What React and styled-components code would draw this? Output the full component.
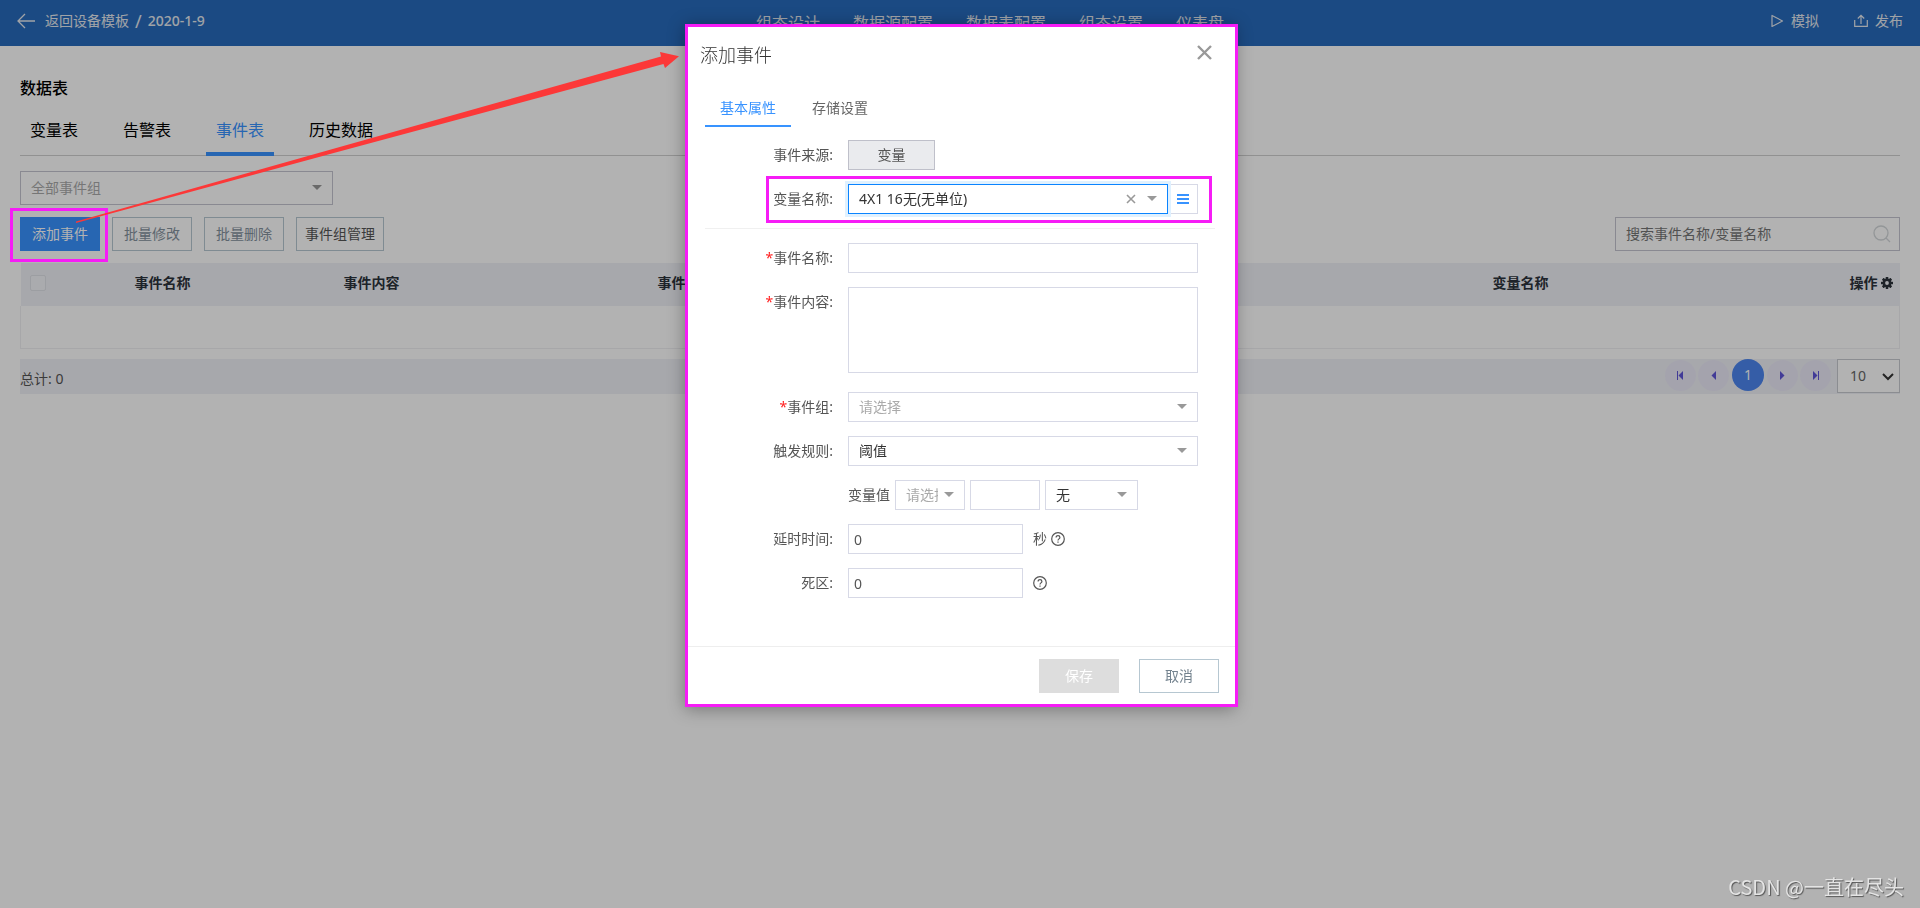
import React from "react";
import styled, { createGlobalStyle, css } from "styled-components";

const BLUE = "#3893ff";
const MAGENTA = "#f61cf6";

const GlobalStyle = createGlobalStyle`
  *, *::before, *::after { box-sizing: border-box; }
  body {
    margin: 0;
    background: #fff;
    color: #333;
    font: 14px/20px "Noto Sans", "Noto Sans CJK SC", sans-serif;
  }
  button, input, select, textarea { font: inherit; color: inherit; margin: 0; border-radius: 0; }
  button { cursor: pointer; }
`;

/* ---------- page ---------- */

const Page = styled.div`
  min-height: 100vh;
`;

const TopBar = styled.header`
  display: grid;
  grid-template-columns: 1fr auto 1fr;
  align-items: center;
  height: 46px;
  padding: 0 17px;
  background: #286bbc;
  color: #e6eaf0;
`;

const Crumb = styled.div`
  display: flex;
  align-items: center;
  height: 42px;
  gap: 6px;
  align-self: start;
`;

const BackLink = styled.a`
  display: flex;
  align-items: center;
  gap: 10px;
  color: inherit;
  text-decoration: none;
`;

const Slash = styled.span`
  font-size: 18px;
`;

const ProjectName = styled.span`
  font-weight: 500;
`;

const MainNav = styled.nav`
  display: flex;
  gap: 33px;
  padding-left: 60px;
`;

const NavLink = styled.a`
  color: inherit;
  font-size: 16px;
  text-decoration: none;
  white-space: nowrap;
`;

const TopActions = styled.div`
  display: flex;
  justify-content: flex-end;
  align-self: start;
  height: 42px;
  gap: 35px;
`;

const TopAction = styled.button`
  display: flex;
  align-items: center;
  gap: 7px;
  padding: 0;
  border: 0;
  background: none;
`;

const Main = styled.main`
  padding: 32px 20px 0;
`;

const PageTitle = styled.h1`
  margin: 0;
  color: #000;
  font-size: 16px;
  font-weight: 500;
  line-height: 20px;
`;

const PageTabs = styled.div`
  display: flex;
  gap: 25px;
  margin-top: 8px;
  box-shadow: inset 0 -1px #d0d0d0;
`;

const PageTab = styled.button`
  height: 50px;
  padding: 2px 10px 0;
  border: 0;
  border-bottom: 4px solid ${(p) => (p.$active ? BLUE : "transparent")};
  background: none;
  color: ${(p) => (p.$active ? BLUE : "#000")};
  font-size: 16px;
`;

const Filters = styled.div`
  margin-top: 15px;
`;

const Toolbar = styled.div`
  display: flex;
  gap: 12px;
  margin: 12px 0;
`;

const ToolButton = styled.button`
  height: 34px;
  min-width: 80px;
  padding: 0 8px;
  border: 1px solid #b6c7d1;
  background: #fff;
  color: #555;
  &:disabled { color: #84929e; }
  ${(p) => p.$primary && css`
    border-color: ${BLUE};
    background: ${BLUE};
    color: #fff;
  `}
`;

const Marked = styled.div`
  position: relative;
`;

const Mark = styled.span`
  position: absolute;
  inset: ${(p) => p.$inset};
  z-index: 20;
  border: 3px solid ${MAGENTA};
  pointer-events: none;
`;

const SearchBox = styled.label`
  display: flex;
  align-items: center;
  width: 285px;
  height: 34px;
  margin-left: auto;
  padding: 0 8px 0 10px;
  border: 1px solid #c4c5d0;
`;

const SearchInput = styled.input`
  flex: 1;
  min-width: 0;
  padding: 0;
  border: 0;
  outline: 0;
  background: none;
  &::placeholder { color: #757575; opacity: 1; }
`;

const Table = styled.table`
  width: 100%;
  table-layout: fixed;
  border-collapse: collapse;
`;

const HeadCell = styled.th`
  height: 43px;
  padding: 0 0 4px 9px;
  background: #f0f1f7;
  color: #2c333b;
  font-weight: 700;
  text-align: left;
  white-space: nowrap;
`;

const HeadLabel = styled.span`
  display: flex;
  align-items: center;
  gap: 3px;
`;

const EmptyCell = styled.td`
  height: 42px;
  border: 1px solid #f0f0f2;
  border-top: 0;
`;

const CheckBox = styled.input`
  display: block;
  appearance: none;
  width: 16px;
  height: 16px;
  margin: 0;
  border: 1px solid #e0e2e8;
  border-radius: 2px;
  background: #f4f5f9;
`;

const TableFoot = styled.div`
  display: flex;
  align-items: flex-start;
  justify-content: space-between;
  height: 35px;
  margin-top: 10px;
  background: #f0f1f7;
`;

const Total = styled.span`
  padding-top: 10px;
  color: #555;
`;

const Pager = styled.div`
  display: flex;
  align-items: flex-end;
  gap: 2px;
`;

const PageButton = styled.button`
  display: flex;
  align-items: center;
  justify-content: center;
  width: ${(p) => (p.$active ? 32 : 31)}px;
  height: ${(p) => (p.$active ? 32 : 31)}px;
  margin-bottom: 2px;
  padding: 0;
  border: 0;
  border-radius: 50%;
  background: ${(p) => (p.$active ? "#4c86f0" : "#ebeaf8")};
  color: ${(p) => (p.$active ? "#fff" : "#5f55d8")};
  ${(p) => p.$active && css`
    align-self: flex-start;
    margin: 0 1px;
  `}
`;

const SizeSelect = styled.span`
  position: relative;
  display: flex;
  margin-left: 4px;
  color: #333;
  svg { position: absolute; right: 6px; top: 14px; pointer-events: none; }
  select {
    appearance: none;
    width: 63px;
    height: 34px;
    padding: 0 24px 0 12px;
    border: 1px solid #c8cad0;
    background: #fff;
    color: #666;
  }
`;

const Backdrop = styled.div`
  position: fixed;
  inset: 0;
  z-index: 10;
  background: rgba(0, 0, 0, 0.3);
`;

/* ---------- shared fields ---------- */

const SelectWrap = styled.span`
  position: relative;
  display: block;
  width: ${(p) => p.$width || "100%"};
  &::after {
    content: "";
    position: absolute;
    top: calc(50% - 3px);
    right: 11px;
    border: 5px solid transparent;
    border-top-color: #999;
    border-bottom: 0;
    pointer-events: none;
  }
`;

const SelectField = styled.select`
  appearance: none;
  display: block;
  width: 100%;
  height: ${(p) => (p.$tall ? 34 : 30)}px;
  padding: 0 26px 0 10px;
  border: 1px solid ${(p) => (p.$tall ? "#c4c5d0" : "#d7d9e6")};
  outline: 0;
  background: #fff;
  color: ${(p) => (p.$placeholder ? "#aaa" : "#333")};
  &:disabled { opacity: 1; }
  ${(p) => p.$focused && css`
    border-color: #0a84ff;
    box-shadow: 0 0 0 3px #e0f1ff;
  `}
`;

function Select({ width, children, extra, ...rest }) {
  return (
    <SelectWrap $width={width}>
      <SelectField {...rest}>{children}</SelectField>
      {extra}
    </SelectWrap>
  );
}

const TextField = styled.input`
  width: ${(p) => p.$width || "100%"};
  height: 30px;
  padding: 0 5px;
  border: 1px solid #d7d9e6;
  outline: 0;
  background: #fff;
  color: #555;
`;

const TextArea = styled.textarea`
  display: block;
  width: 100%;
  height: 86px;
  margin-bottom: 5px;
  padding: 5px;
  border: 1px solid #d7d9e6;
  outline: 0;
  resize: none;
`;

/* ---------- dialog ---------- */

const DialogLayer = styled.div`
  position: fixed;
  inset: 0;
  z-index: 30;
  display: flex;
  align-items: flex-start;
  justify-content: center;
  padding-top: 24px;
`;

const Dialog = styled.section`
  position: relative;
  width: 550px;
  background: #fff;
  box-shadow: 0 2px 16px rgba(0, 0, 0, 0.35);
`;

const DialogHead = styled.header`
  display: flex;
  align-items: center;
  justify-content: space-between;
  height: 62px;
  padding: 0 20px 0 15px;
`;

const DialogTitle = styled.h2`
  margin: 0;
  font-size: 18px;
  font-weight: 300;
  line-height: 24px;
`;

const CloseButton = styled.button`
  display: flex;
  padding: 0 3px 5px;
  border: 0;
  background: none;
  color: #999;
`;

const DialogTabs = styled.div`
  display: flex;
  gap: 6px;
  padding: 4px 20px 0;
`;

const DialogTab = styled.button`
  width: 86px;
  height: 37px;
  padding: 0;
  border: 0;
  border-bottom: 2px solid ${(p) => (p.$active ? BLUE : "transparent")};
  background: none;
  color: ${(p) => (p.$active ? BLUE : "#666")};
`;

const Form = styled.form`
  display: flex;
  flex-direction: column;
  gap: 14px;
  padding: 13px 20px 48px;
`;

const Row = styled.div`
  position: relative;
  display: grid;
  grid-template-columns: 128px 350px;
  column-gap: 15px;
`;

const Label = styled.label`
  color: #555;
  line-height: 30px;
  text-align: right;
`;

const Required = styled.span`
  color: #f22;
`;

const Controls = styled.div`
  display: flex;
  align-items: center;
  gap: ${(p) => p.$gap || 0}px;
  color: #555;
`;

const SourceButton = styled.button`
  width: 87px;
  height: 30px;
  padding: 0;
  border: 1px solid #bfc0ca;
  background: #eaebee;
`;

const Unit = styled.span`
  padding-left: 6px;
`;

const ClearButton = styled.button`
  position: absolute;
  top: 10px;
  right: 32px;
  display: flex;
  padding: 0;
  border: 0;
  background: none;
  color: #999;
`;

const ListButton = styled.button`
  display: flex;
  align-items: center;
  justify-content: center;
  flex: 1;
  height: 30px;
  padding: 0;
  border: 1px solid #d7d9e6;
  border-left: 0;
  background: #fff;
  color: ${BLUE};
`;

const Divider = styled.hr`
  width: 100%;
  height: 1px;
  margin: 0;
  border: 0;
  background: #f0f0f0;
`;

const DialogFoot = styled.footer`
  display: flex;
  justify-content: flex-end;
  gap: 20px;
  padding: 12px 16px 14px;
  border-top: 1px solid #eee;
`;

const FootButton = styled.button`
  width: 80px;
  height: 34px;
  padding: 0;
  border: 1px solid #b6c7d1;
  background: #fff;
  color: #74838f;
  &:disabled { border-color: #ddd; background: #ddd; color: #fff; }
`;

const ArrowLayer = styled.svg`
  position: absolute;
  top: 0;
  left: 0;
  z-index: 40;
  pointer-events: none;
`;

const Watermark = styled.div`
  position: fixed;
  right: 16px;
  bottom: 9px;
  z-index: 40;
  color: #e4e4e4;
  font: 20px/24px "Noto Sans CJK SC", sans-serif;
  text-shadow: 1px 1px 1px #555;
`;

/* ---------- icons ---------- */

const Stroke = ({ w, h, sw = 1, children }) => (
  <svg width={w} height={h} viewBox={`0 0 ${w} ${h}`} fill="none" stroke="currentColor" strokeWidth={sw} aria-hidden="true">
    {children}
  </svg>
);

const BackIcon = () => <Stroke w={18} h={16} sw={1.3}><path d="M8 1 1 8l7 7M1 8h17" /></Stroke>;
const PlayIcon = () => <Stroke w={13} h={14} sw={1.2}><path d="M1 1.5v11L11.500 7z" strokeLinejoin="round" /></Stroke>;
const UploadIcon = () => <Stroke w={14} h={14} sw={1.2}><path d="M.7 6v6.3h12.6V6M7 10V1.5M3.8 4.5 7 1.3l3.2 3.2" /></Stroke>;
const SearchIcon = () => <svg width="18" height="18" viewBox="0 0 18 18" fill="none" stroke="#d3d7da" strokeWidth="1.3" aria-hidden="true"><circle cx="8" cy="8" r="7" /><path d="m13 13 4 4" /></svg>;
const CrossIcon = ({ size, sw }) => <Stroke w={size} h={size} sw={sw}><path d={`M1 1 ${size - 1} ${size - 1}M${size - 1} 1 1 ${size - 1}`} /></Stroke>;
const ListIcon = () => <Stroke w={12} h={10} sw={2}><path d="M0 1h12M0 5h12M0 9h12" /></Stroke>;
const ChevronIcon = () => <Stroke w={12} h={8} sw={2}><path d="m1 1 5 5 5-5" /></Stroke>;

const GearIcon = () => (
  <svg width="12" height="12" viewBox="0 0 12 12" aria-hidden="true">
    <g fill="currentColor">
      {[0, 45, 90, 135].map((a) => (
        <rect key={a} x="4.7" y="0" width="2.6" height="12" rx=".4" transform={`rotate(${a} 6 6)`} />
      ))}
      <circle cx="6" cy="6" r="4.4" />
    </g>
    <circle cx="6" cy="6" r="1.9" fill="#f0f1f7" />
  </svg>
);

const HelpIcon = () => (
  <svg width="14" height="14" viewBox="0 0 14 14" fill="none" stroke="#555" strokeWidth="1.2" aria-hidden="true">
    <circle cx="7" cy="7" r="6.3" />
    <path d="M5.1 5.5c0-2.6 3.8-2.4 3.8-.1C8.9 6.900 7 6.900 7 8.500M7 9.600v1.200" />
  </svg>
);

const PagerIcon = ({ flip, bar }) => (
  <svg width="7" height="9" viewBox="0 0 7 9" fill="currentColor" aria-hidden="true">
    <g transform={flip ? "translate(7 0) scale(-1 1)" : undefined}>
      {bar && <path d="M0 0h1v9H0z" />}
      <path d="M1.500 4.500 6 0v9z" />
    </g>
  </svg>
);

/* ---------- screen ---------- */

function FormRow({ label, id, required, children }) {
  return (
    <Row>
      <Label htmlFor={id}>{required && <Required>*</Required>}{label}:</Label>
      {children}
    </Row>
  );
}

function EventDialog() {
  return (
    <DialogLayer>
      <Dialog role="dialog" aria-labelledby="dialog-title">
        <DialogHead>
          <DialogTitle id="dialog-title">添加事件</DialogTitle>
          <CloseButton aria-label="关闭"><CrossIcon size={15} sw={2.4} /></CloseButton>
        </DialogHead>
        <DialogTabs>
          <DialogTab $active>基本属性</DialogTab>
          <DialogTab>存储设置</DialogTab>
        </DialogTabs>
        <Form onSubmit={(e) => e.preventDefault()}>
          <FormRow label="事件来源" id="source">
            <Controls><SourceButton id="source" type="button">变量</SourceButton></Controls>
          </FormRow>
          <FormRow label="变量名称" id="variable">
            <Controls>
              <Select
                id="variable"
                width="320px"
                $focused
                extra={<ClearButton type="button" aria-label="清除"><CrossIcon size={10} sw={1.6} /></ClearButton>}
              >
                <option>4X1 16无(无单位)</option>
              </Select>
              <ListButton type="button" aria-label="选择变量"><ListIcon /></ListButton>
            </Controls>
            <Mark $inset="-8px 3px -9px 61px" />
          </FormRow>
          <Divider />
          <FormRow label="事件名称" id="name" required><TextField id="name" /></FormRow>
          <FormRow label="事件内容" id="content" required><TextArea id="content" /></FormRow>
          <FormRow label="事件组" id="group" required>
            <Select id="group" $placeholder><option>请选择</option></Select>
          </FormRow>
          <FormRow label="触发规则" id="rule">
            <Select id="rule"><option>阈值</option></Select>
          </FormRow>
          <Row>
            <span />
            <Controls $gap={5}>
              <label htmlFor="operator">变量值</label>
              <Select id="operator" width="70px" $placeholder><option>请选择</option></Select>
              <TextField $width="70px" aria-label="阈值" />
              <Select width="93px" aria-label="条件"><option>无</option></Select>
            </Controls>
          </Row>
          <FormRow label="延时时间" id="delay">
            <Controls $gap={4}>
              <TextField id="delay" $width="175px" defaultValue="0" />
              <Unit>秒</Unit>
              <HelpIcon />
            </Controls>
          </FormRow>
          <FormRow label="死区" id="deadband">
            <Controls $gap={10}>
              <TextField id="deadband" $width="175px" defaultValue="0" />
              <HelpIcon />
            </Controls>
          </FormRow>
        </Form>
        <DialogFoot>
          <FootButton disabled>保存</FootButton>
          <FootButton>取消</FootButton>
        </DialogFoot>
        <Mark $inset="0 -3px 0 0" />
      </Dialog>
    </DialogLayer>
  );
}

export default function App() {
  return (
    <>
      <GlobalStyle />
      <Page>
        <TopBar>
          <Crumb>
            <BackLink href="#"><BackIcon />返回设备模板</BackLink>
            <Slash>/</Slash>
            <ProjectName>2020-1-9</ProjectName>
          </Crumb>
          <MainNav>
            {["组态设计", "数据源配置", "数据表配置", "组态设置", "仪表盘"].map((t) => (
              <NavLink key={t} href="#">{t}</NavLink>
            ))}
          </MainNav>
          <TopActions>
            <TopAction><PlayIcon />模拟</TopAction>
            <TopAction><UploadIcon />发布</TopAction>
          </TopActions>
        </TopBar>
        <Main>
          <PageTitle>数据表</PageTitle>
          <PageTabs>
            {["变量表", "告警表", "事件表", "历史数据"].map((t) => (
              <PageTab key={t} $active={t === "事件表"}>{t}</PageTab>
            ))}
          </PageTabs>
          <Filters>
            <Select width="313px" $tall $placeholder aria-label="事件组"><option>全部事件组</option></Select>
          </Filters>
          <Toolbar>
            <Marked>
              <ToolButton $primary>添加事件</ToolButton>
              <Mark $inset="-9px -8px -11px -10px" />
            </Marked>
            <ToolButton disabled>批量修改</ToolButton>
            <ToolButton disabled>批量删除</ToolButton>
            <ToolButton>事件组管理</ToolButton>
            <SearchBox>
              <SearchInput placeholder="搜索事件名称/变量名称" aria-label="搜索" />
              <SearchIcon />
            </SearchBox>
          </Toolbar>
          <Table>
            <colgroup>
              <col style={{ width: 105 }} />
              <col style={{ width: 209 }} />
              <col style={{ width: 314 }} />
              <col />
              <col style={{ width: 357 }} />
              <col style={{ width: 59 }} />
            </colgroup>
            <thead>
              <tr>
                <HeadCell><CheckBox type="checkbox" aria-label="全选" /></HeadCell>
                <HeadCell>事件名称</HeadCell>
                <HeadCell>事件内容</HeadCell>
                <HeadCell>事件类型</HeadCell>
                <HeadCell>变量名称</HeadCell>
                <HeadCell><HeadLabel>操作<GearIcon /></HeadLabel></HeadCell>
              </tr>
            </thead>
            <tbody><tr><EmptyCell colSpan={6} /></tr></tbody>
          </Table>
          <TableFoot>
            <Total>总计: 0</Total>
            <Pager>
              <PageButton aria-label="首页"><PagerIcon bar /></PageButton>
              <PageButton aria-label="上一页"><PagerIcon /></PageButton>
              <PageButton $active>1</PageButton>
              <PageButton aria-label="下一页"><PagerIcon flip /></PageButton>
              <PageButton aria-label="末页"><PagerIcon flip bar /></PageButton>
              <SizeSelect>
                <select aria-label="每页条数"><option>10</option></select>
                <ChevronIcon />
              </SizeSelect>
            </Pager>
          </TableFoot>
        </Main>
      </Page>
      <Backdrop />
      <EventDialog />
      <ArrowLayer width="700" height="240" viewBox="0 0 700 240" aria-hidden="true">
        <path d="M76 221.500 330 149.800 661 56.500 660 52 679 56.300 665 68 663.500 64 330 154 76 223z" fill="#fc3838" />
      </ArrowLayer>
      <Watermark>CSDN @一直在尽头</Watermark>
    </>
  );
}
